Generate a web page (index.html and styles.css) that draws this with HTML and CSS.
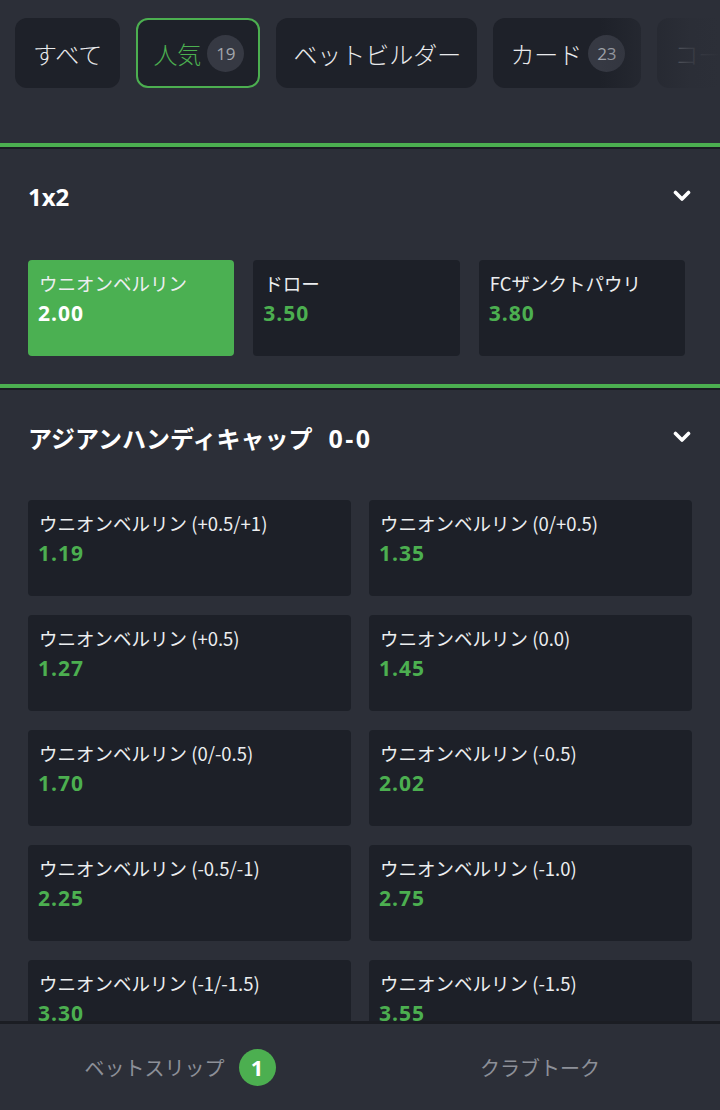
FILE: index.html
```html
<!DOCTYPE html>
<html lang="ja">
<head>
<meta charset="utf-8">
<title>Markets</title>
<link rel="stylesheet" href="styles.css">
</head>
<body>
<div class="page">
  <div class="tabs-wrap">
    <div class="tabs">
      <div class="tab">すべて</div>
      <div class="tab active">人気<span class="count">19</span></div>
      <div class="tab">ベットビルダー</div>
      <div class="tab">カード<span class="count">23</span></div>
      <div class="tab">コーナー</div>
    </div>
    <div class="tabs-fade"></div>
  </div>

  <section class="market">
    <div class="market-head">
      <h2 class="market-title">1x2</h2>
      <svg class="chev" width="18" height="12" viewBox="0 0 18 12"><polyline points="2.5,2.5 9,9 15.5,2.5" fill="none" stroke="#fff" stroke-width="3.6" stroke-linecap="round" stroke-linejoin="round"/></svg>
    </div>
    <div class="grid three">
      <div class="odd selected"><div class="name">ウニオンベルリン</div><div class="price">2.00</div></div>
      <div class="odd"><div class="name">ドロー</div><div class="price">3.50</div></div>
      <div class="odd"><div class="name">FCザンクトパウリ</div><div class="price">3.80</div></div>
    </div>
  </section>

  <section class="market">
    <div class="market-head">
      <h2 class="market-title">アジアンハンディキャップ<span class="score">0-0</span></h2>
      <svg class="chev" width="18" height="12" viewBox="0 0 18 12"><polyline points="2.5,2.5 9,9 15.5,2.5" fill="none" stroke="#fff" stroke-width="3.6" stroke-linecap="round" stroke-linejoin="round"/></svg>
    </div>
    <div class="grid two">
      <div class="odd"><div class="name">ウニオンベルリン (+0.5/+1)</div><div class="price">1.19</div></div>
      <div class="odd"><div class="name">ウニオンベルリン (0/+0.5)</div><div class="price">1.35</div></div>
      <div class="odd"><div class="name">ウニオンベルリン (+0.5)</div><div class="price">1.27</div></div>
      <div class="odd"><div class="name">ウニオンベルリン (0.0)</div><div class="price">1.45</div></div>
      <div class="odd"><div class="name">ウニオンベルリン (0/-0.5)</div><div class="price">1.70</div></div>
      <div class="odd"><div class="name">ウニオンベルリン (-0.5)</div><div class="price">2.02</div></div>
      <div class="odd"><div class="name">ウニオンベルリン (-0.5/-1)</div><div class="price">2.25</div></div>
      <div class="odd"><div class="name">ウニオンベルリン (-1.0)</div><div class="price">2.75</div></div>
      <div class="odd"><div class="name">ウニオンベルリン (-1/-1.5)</div><div class="price">3.30</div></div>
      <div class="odd"><div class="name">ウニオンベルリン (-1.5)</div><div class="price">3.55</div></div>
    </div>
  </section>
</div>

<nav class="bottom-bar">
  <div class="bb-item">ベットスリップ<span class="bb-badge">1</span></div>
  <div class="bb-item">クラブトーク</div>
</nav>
</body>
</html>
```

FILE: styles.css
```css
html, body {
  margin: 0;
  padding: 0;
  background: #2c2f38;
  height: 100%;
  overflow: hidden;
}
body {
  font-family: "Noto Sans CJK JP", "Noto Sans", sans-serif;
  color: #eceef0;
}
.page {
  display: flex;
  flex-direction: column;
}

/* tabs */
.tabs-wrap {
  position: relative;
  height: 143px;
  box-sizing: border-box;
  padding-top: 18px;
  overflow: hidden;
}
.tabs {
  display: flex;
  gap: 16px;
  padding-left: 15px;
  white-space: nowrap;
}
.tab {
  flex: none;
  height: 70px;
  box-sizing: border-box;
  display: flex;
  align-items: center;
  padding: 0 14px 0 15px;
  background: #1e2129;
  border-radius: 12px;
  font-size: 24px;
  font-weight: 300;
  color: #e9eaec;
  border: 2px solid transparent;
}
.tab:first-child {
  padding: 0 16px 0 16px;
}
.tab.active {
  border-color: #4caf50;
  color: #4caf50;
}
.count {
  margin-left: 6px;
  width: 37px;
  height: 37px;
  border-radius: 50%;
  background: #363943;
  color: #a3a6ad;
  font-family: "Open Sans", sans-serif;
  font-weight: 400;
  font-size: 17px;
  display: flex;
  align-items: center;
  justify-content: center;
}
.tabs-fade {
  position: absolute;
  top: 0;
  right: 0;
  width: 120px;
  height: 100%;
  background: linear-gradient(to right, rgba(44,47,56,0) 0%, rgba(44,47,56,0.55) 40%, rgba(44,47,56,0.92) 75%, #2c2f38 100%);
}

/* markets */
.market {
  border-top: 4px solid #4caf50;
  box-shadow: inset 0 2px 0 #1a1c22;
  padding-top: 2px;
  padding-bottom: 28px;
}
.market-head {
  height: 94px;
  display: flex;
  align-items: center;
  justify-content: space-between;
  padding: 0 29px 0 28px;
}
.market-title {
  margin: 0;
  font-family: "Open Sans", "Noto Sans CJK JP", sans-serif;
  font-weight: 700;
  font-size: 24px;
  color: #ffffff;
}
.score {
  margin-left: 16px;
  letter-spacing: 2.5px;
  font-size: 25px;
}
.chev {
  display: block;
}
.grid {
  display: grid;
}
.grid.three {
  grid-template-columns: repeat(3, 1fr);
  column-gap: 19px;
  padding: 17px 35px 0 28px;
}
.grid.two {
  grid-template-columns: repeat(2, 1fr);
  column-gap: 18px;
  row-gap: 19px;
  padding: 16px 28px 0 28px;
}
.odd {
  height: 96px;
  box-sizing: border-box;
  padding: 10px 10px;
  background: #1d2028;
  border-radius: 4px;
}
.odd .name {
  font-size: 18.5px;
  line-height: 26px;
  color: #eceef0;
  padding-left: 1px;
  white-space: nowrap;
}
.odd .price {
  margin-top: 4px;
  font-family: "Open Sans", sans-serif;
  font-weight: 700;
  font-size: 21px;
  letter-spacing: 1px;
  line-height: 26px;
  color: #4caf50;
}
.odd.selected {
  background: #4bb052;
}
.odd.selected .price {
  color: #ffffff;
}

/* bottom bar */
.bottom-bar {
  position: fixed;
  left: 0;
  right: 0;
  bottom: 0;
  height: 89px;
  box-sizing: border-box;
  border-top: 3px solid #1b1d23;
  background: #2c2f38;
  display: flex;
}
.bb-item {
  flex: 1;
  display: flex;
  align-items: center;
  justify-content: center;
  font-size: 20px;
  color: #8d9098;
}
.bb-badge {
  margin-left: 14px;
  width: 37px;
  height: 37px;
  border-radius: 50%;
  background: #4caf50;
  color: #ffffff;
  font-family: "Open Sans", sans-serif;
  font-weight: 700;
  font-size: 22px;
  display: flex;
  align-items: center;
  justify-content: center;
}
```
